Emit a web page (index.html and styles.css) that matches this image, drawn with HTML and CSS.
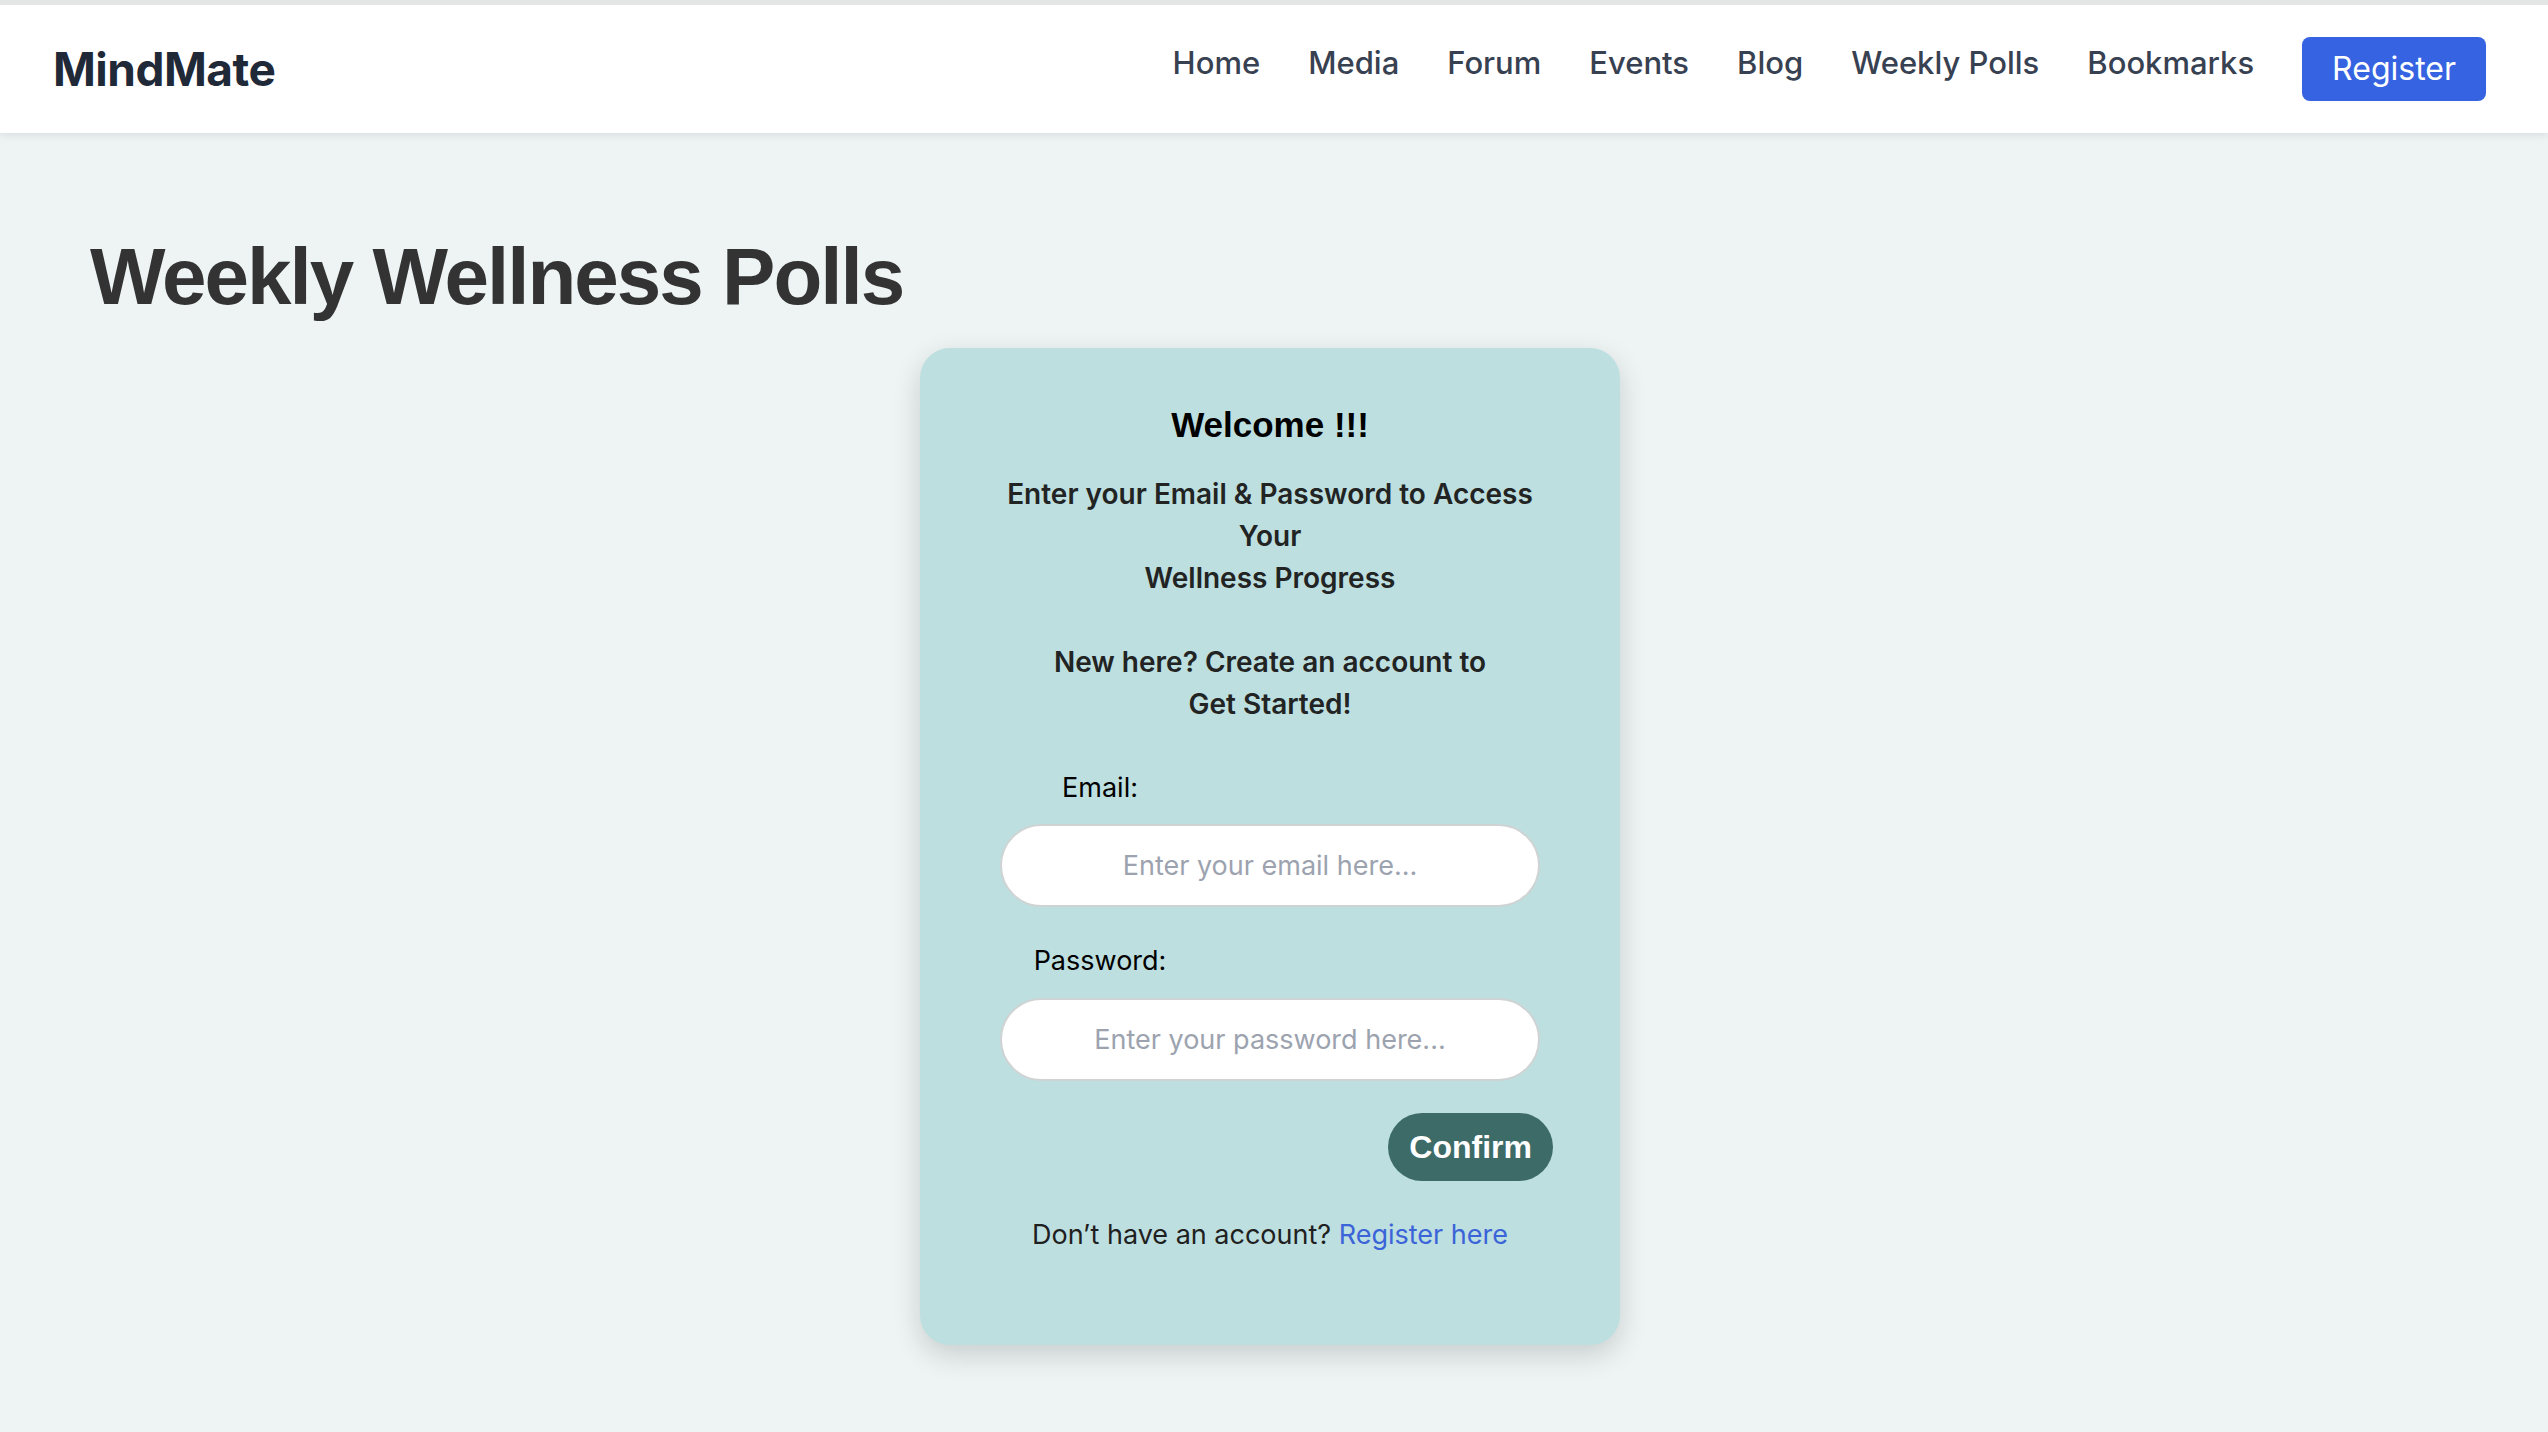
FILE: index.html
```html
<!DOCTYPE html>
<html lang="en">
<head>
<meta charset="utf-8">
<title>MindMate - Weekly Wellness Polls</title>
<link rel="stylesheet" href="styles.css">
</head>
<body>
<header class="site-header">
  <a class="brand" href="#">MindMate</a>
  <nav class="nav">
    <a class="nav-link" href="#">Home</a>
    <a class="nav-link" href="#">Media</a>
    <a class="nav-link" href="#">Forum</a>
    <a class="nav-link" href="#">Events</a>
    <a class="nav-link" href="#">Blog</a>
    <a class="nav-link" href="#">Weekly Polls</a>
    <a class="nav-link" href="#">Bookmarks</a>
    <a class="nav-button" href="#">Register</a>
  </nav>
</header>
<main class="page">
  <h1 class="page-title">Weekly Wellness Polls</h1>
  <section class="card">
    <h2 class="card-title">Welcome !!!</h2>
    <p class="card-intro">Enter your Email &amp; Password to Access<br>Your<br>Wellness Progress<br><br>New here? Create an account to<br>Get Started!</p>
    <form class="login-form">
      <label class="field-label" for="email">Email:</label>
      <input class="field-input" id="email" type="email" placeholder="Enter your email here...">
      <label class="field-label field-label-pw" for="password">Password:</label>
      <input class="field-input" id="password" type="password" placeholder="Enter your password here...">
      <div class="form-actions">
        <button class="confirm-btn" type="button">Confirm</button>
      </div>
    </form>
    <p class="card-footer">Don’t have an account? <a class="card-link" href="#">Register here</a></p>
  </section>
</main>
</body>
</html>
```

FILE: styles.css
```css
* { box-sizing: border-box; }

html, body {
  margin: 0;
  padding: 0;
}

body {
  background: #eef4f4;
  font-family: Inter, "Noto Sans", sans-serif;
  min-height: 1432px;
}

.site-header {
  display: flex;
  align-items: center;
  justify-content: space-between;
  height: 133px;
  padding: 0 62px 0 53px;
  background: #ffffff;
  border-top: 5px solid #e4e6e6;
  box-shadow: 0 3px 8px rgba(0, 0, 0, 0.08);
}

.brand {
  font-family: Inter, sans-serif;
  font-weight: 700;
  font-size: 46px;
  line-height: 56px;
  color: #1f2937;
  text-decoration: none;
  letter-spacing: -0.5px;
}

.nav {
  display: flex;
  align-items: center;
  gap: 48px;
}

.nav-link {
  font-family: Inter, sans-serif;
  font-size: 31px;
  line-height: 48px;
  font-weight: 500;
  color: #374151;
  text-decoration: none;
  margin-bottom: 13px;
}

.nav-button {
  display: block;
  font-family: Inter, sans-serif;
  font-size: 32px;
  line-height: 48px;
  color: #ffffff;
  background: #3563e2;
  border-radius: 8px;
  padding: 8px 30px;
  text-decoration: none;
}

.page {
  padding: 96px 0 0;
}

.page-title {
  margin: 0;
  padding-left: 90px;
  font-family: "Liberation Sans", Arial, sans-serif;
  font-weight: 700;
  font-size: 80px;
  line-height: 96px;
  letter-spacing: -2px;
  color: #333333;
}

.card {
  width: 700px;
  margin: 23px 0 0 calc(50% - 354px);
  padding: 56px 80px 92px;
  background: #bedfe0;
  border-radius: 30px;
  box-shadow: 0 10px 28px rgba(0, 0, 0, 0.16);
  text-align: center;
}

.card-title {
  margin: 0;
  font-family: "Liberation Sans", Arial, sans-serif;
  font-weight: 700;
  font-size: 35px;
  line-height: 42px;
  color: #000000;
}

.card-intro {
  margin: 27px 0 0;
  font-family: Inter, sans-serif;
  font-weight: 600;
  font-size: 28px;
  line-height: 42px;
  color: #222424;
}

.login-form {
  display: flex;
  flex-direction: column;
  align-items: stretch;
  margin-top: 45px;
}

.field-label {
  display: block;
  width: 200px;
  text-align: center;
  font-family: Inter, sans-serif;
  font-size: 27px;
  line-height: 36px;
  color: #000000;
  margin-bottom: 18px;
}

.field-label-pw {
  margin-top: 36px;
  margin-bottom: 19px;
}

.field-input {
  display: block;
  width: 100%;
  height: 83px;
  border: 2px solid #cfd3d3;
  border-radius: 42px;
  background: #ffffff;
  font-family: Inter, sans-serif;
  font-size: 27px;
  text-align: center;
  color: #111;
  outline: none;
}

.field-input::placeholder {
  color: #9ca3af;
}

.form-actions {
  display: flex;
  justify-content: flex-end;
  margin-top: 32px;
  margin-right: -13px;
}

.confirm-btn {
  font-family: "Liberation Sans", Arial, sans-serif;
  font-weight: 700;
  font-size: 32px;
  line-height: 36px;
  padding: 16px 21px;
  color: #ffffff;
  background: #3d6b68;
  border: none;
  border-radius: 34px;
  cursor: pointer;
}

.card-footer {
  margin: 36px 0 0;
  font-family: Inter, sans-serif;
  font-size: 27px;
  line-height: 36px;
  color: #1f2121;
}

.card-link {
  color: #3a64d8;
  text-decoration: none;
}
```
